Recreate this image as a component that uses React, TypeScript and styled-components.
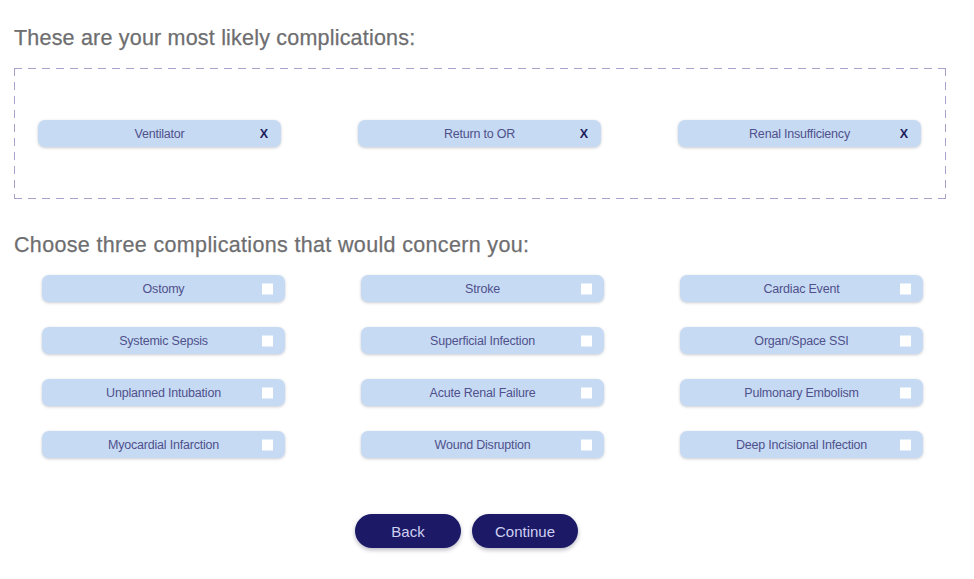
import React from "react";
import styled, { createGlobalStyle } from "styled-components";

const Global = createGlobalStyle`
  html, body { margin: 0; padding: 0; background: #ffffff; }
  body { font-family: "Liberation Sans", Arial, sans-serif; }
`;

const Page = styled.div`
  width: 974px;
  height: 579px;
  box-sizing: border-box;
  padding: 25px 28px 0 14px;
  display: flex;
  flex-direction: column;
`;

const Heading = styled.h2<{ $mt?: number; $ls?: number }>`
  margin: ${(p) => p.$mt ?? 0}px 0 0 0;
  font-size: 21.5px;
  line-height: 26px;
  font-weight: normal;
  color: #6e6e70;
  letter-spacing: ${(p) => p.$ls ?? 0.2}px;
  -webkit-text-stroke: 0.25px #6e6e70;
`;

const DashedBox = styled.div`
  margin-top: 17px;
  height: 131px;
  box-sizing: border-box;
  padding: 0 25px 0 24px;
  display: grid;
  grid-template-columns: repeat(3, 243px);
  column-gap: 77px;
  align-items: center;
  background-image:
    repeating-linear-gradient(90deg, #a6a3cd 0 8px, transparent 8px 14px),
    repeating-linear-gradient(90deg, #a6a3cd 0 8px, transparent 8px 14px),
    repeating-linear-gradient(180deg, #a6a3cd 0 8px, transparent 8px 14px),
    repeating-linear-gradient(180deg, #a6a3cd 0 8px, transparent 8px 14px);
  background-size: 100% 1px, 100% 1px, 1px 100%, 1px 100%;
  background-position: 0 0, 0 100%, 0 0, 100% 0;
  background-repeat: no-repeat;
`;

const Chip = styled.div`
  position: relative;
  height: 27px;
  border-radius: 7px;
  background: #c6dbf3;
  box-shadow: 0 1px 3px rgba(60, 70, 100, 0.28);
  display: flex;
  align-items: center;
  justify-content: center;
  font-size: 12.5px;
  letter-spacing: -0.2px;
  color: #50508c;
`;

const Remove = styled.span`
  position: absolute;
  right: 13px;
  top: 50%;
  transform: translateY(-50%);
  font-size: 12.5px;
  font-weight: bold;
  color: #1f1c5e;
  letter-spacing: 0;
`;

const Box = styled.span`
  position: absolute;
  right: 12px;
  top: 50%;
  transform: translateY(-50%);
  width: 11px;
  height: 11px;
  background: #ffffff;
`;

const Grid = styled.div`
  margin-top: 17px;
  padding-left: 28px;
  display: grid;
  grid-template-columns: repeat(3, 243px);
  column-gap: 76px;
  row-gap: 25px;
`;

const Actions = styled.div`
  margin-top: 56px;
  display: flex;
  justify-content: center;
  gap: 11px;
  padding-right: 27px;
`;

const Button = styled.button`
  width: 106px;
  height: 34px;
  border: none;
  border-radius: 17px;
  background: #1c1a66;
  color: #cfd0f2;
  font-family: "Liberation Sans", Arial, sans-serif;
  font-size: 15px;
  box-shadow: 0 2px 4px rgba(20, 20, 60, 0.3);
  cursor: pointer;
`;

const likely = ["Ventilator", "Return to OR", "Renal Insufficiency"];
const options = [
  "Ostomy",
  "Stroke",
  "Cardiac Event",
  "Systemic Sepsis",
  "Superficial Infection",
  "Organ/Space SSI",
  "Unplanned Intubation",
  "Acute Renal Failure",
  "Pulmonary Embolism",
  "Myocardial Infarction",
  "Wound Disruption",
  "Deep Incisional Infection",
];

export default function App() {
  return (
    <>
      <Global />
      <Page>
        <Heading>These are your most likely complications:</Heading>
        <DashedBox>
          {likely.map((l) => (
            <Chip key={l}>
              {l}
              <Remove>X</Remove>
            </Chip>
          ))}
        </DashedBox>
        <Heading $mt={33} $ls={0.34}>
          Choose three complications that would concern you:
        </Heading>
        <Grid>
          {options.map((o) => (
            <Chip key={o}>
              {o}
              <Box />
            </Chip>
          ))}
        </Grid>
        <Actions>
          <Button>Back</Button>
          <Button>Continue</Button>
        </Actions>
      </Page>
    </>
  );
}
